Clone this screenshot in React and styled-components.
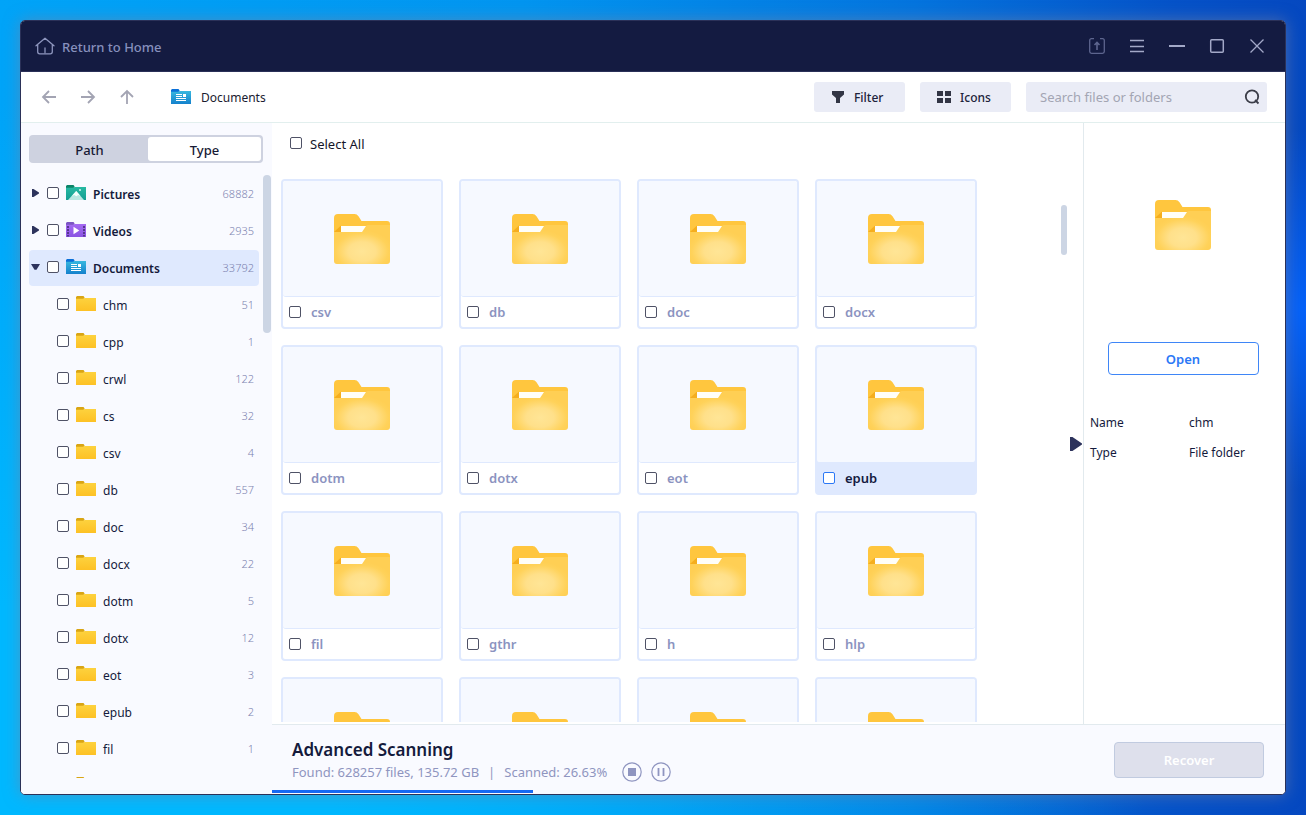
import React, { useState } from "react";
import styled, { createGlobalStyle, css } from "styled-components";

const GlobalStyle = createGlobalStyle`
  *, *::before, *::after { box-sizing: border-box; }
  body {
    margin: 0;
    font-family: "Noto Sans", "Open Sans", sans-serif;
    font-size: 12px;
    line-height: 16px;
    color: #141a3c;
  }
  button, input { font: inherit; color: inherit; }
`;

const Desktop = styled.div`
  height: 100vh;
  padding: 20px;
  background:
    radial-gradient(circle at 100% 38%, rgba(5, 100, 255, 0.9), transparent 180px),
    radial-gradient(ellipse at 0% 100%, rgba(0, 184, 255, 1) 18%, transparent 62%),
    linear-gradient(90deg, #00a4f8 0%, #0295f0 40%, #0474de 70%, #0552c8 90%, #0548c0 100%);
`;

const Window = styled.div`
  height: 100%;
  display: grid;
  grid-template-rows: 51px 51px minmax(0, 1fr);
  border: 1px solid #2b3158;
  border-radius: 5px;
  overflow: hidden;
  background: #fff;
  box-shadow: 0 0 16px rgba(120, 130, 160, 0.6);
`;

const TitleBar = styled.header`
  display: flex;
  align-items: center;
  justify-content: space-between;
  padding: 0 8px 0 14px;
  background: #141b41;
  border-bottom: 1px solid #2a3058;
`;

const HomeLink = styled.a`
  display: flex;
  align-items: center;
  gap: 7px;
  color: #8790bd;
  font-size: 13px;
  font-weight: 500;
  text-decoration: none;
`;

const Caption = styled.span`
  padding-top: 2px;
`;

const WindowControls = styled.div`
  display: flex;
`;

const WindowButton = styled.button`
  width: 40px;
  height: 40px;
  padding: 0;
  display: grid;
  place-items: center;
  border: 0;
  background: none;
  color: ${(p) => (p.$dim ? "#5d658e" : "#a3a9c8")};
`;

const Toolbar = styled.div`
  display: flex;
  align-items: center;
  padding: 0 18px 0 20px;
  border-bottom: 1px solid #e2efee;
`;

const NavGroup = styled.nav`
  display: flex;
  gap: 23px;
`;

const NavButton = styled.button`
  width: 16px;
  height: 16px;
  padding: 0;
  border: 0;
  background: none;
  color: #a3a4b3;
  svg { display: block; }
`;

const Location = styled.div`
  display: flex;
  align-items: center;
  gap: 10px;
  margin-left: 36px;
  color: #1a1b30;
`;

const Tools = styled.div`
  display: flex;
  gap: 15px;
  margin-left: auto;
`;

const ToolButton = styled.button`
  height: 30px;
  min-width: 91px;
  padding: 0 20px 0 16px;
  display: flex;
  align-items: center;
  gap: 8px;
  border: 0;
  border-radius: 3px;
  background: #eaecf6;
  color: #20233a;
  font-weight: 500;
`;

const SearchBox = styled.label`
  width: 241px;
  height: 30px;
  padding: 0 7px 0 14px;
  display: flex;
  align-items: center;
  border-radius: 3px;
  background: #eaecf6;
`;

const SearchInput = styled.input`
  flex: 1;
  min-width: 0;
  padding: 0;
  border: 0;
  outline: 0;
  background: none;
  font-size: 13px;
  &::placeholder { color: #a3a5b3; opacity: 1; }
`;

const Body = styled.div`
  display: grid;
  grid-template-columns: 251px minmax(0, 1fr);
  min-height: 0;
`;

const Sidebar = styled.aside`
  display: flex;
  flex-direction: column;
  min-height: 0;
  padding: 12px 1px 16px 8px;
  background: #f9faff;
`;

const Tabs = styled.div`
  display: grid;
  grid-template-columns: 117fr 113fr;
  height: 28px;
  margin-right: 8px;
  padding: 2px;
  border-radius: 4px;
  background: #ced2e0;
`;

const Tab = styled.button`
  padding: 2px 0 0;
  border: 0;
  border-radius: 3px;
  background: ${(p) => (p.$raised ? "#fff" : "transparent")};
  color: #171a35;
  font-size: 13px;
  font-weight: 500;
`;

const TreeArea = styled.div`
  flex: 1;
  min-height: 0;
  margin-top: 12px;
  display: flex;
  justify-content: space-between;
  overflow: hidden;
`;

const TreeList = styled.ul`
  flex: 1;
  margin: 0 4px 0 0;
  padding: 1px 0 0;
  list-style: none;
`;

const TreeRow = styled.li`
  height: 36px;
  margin-bottom: 1px;
  padding: 0 5px 2px ${(p) => (p.$child ? 28 : 2)}px;
  display: flex;
  align-items: center;
  border-radius: 4px;
  background: ${(p) => (p.$selected ? "#dfe9fe" : "transparent")};
  > svg { margin-right: 7px; }
`;

const Expander = styled.button`
  width: 9px;
  height: 16px;
  margin-right: 7px;
  padding: 0;
  display: grid;
  place-items: center;
  border: 0;
  background: none;
`;

const RowLabel = styled.label`
  flex: 1;
  padding-top: 3px;
  font-weight: ${(p) => (p.$strong ? 600 : 400)};
`;

const Count = styled.span`
  padding-top: 1px;
  font-size: 11px;
  font-weight: 300;
  color: #7c83b0;
`;

const CheckBox = styled.input.attrs({ type: "checkbox" })`
  appearance: none;
  flex: none;
  width: 12px;
  height: 12px;
  margin: 0;
  border: 1px solid ${(p) => (p.$active ? "#2b78f6" : "#4f5266")};
  border-radius: 2px;
  background: #fff;
  &:checked { background: #2b78f6; }
`;

const TreeCheck = styled(CheckBox)`
  margin-right: 7px;
`;

const ScrollThumb = styled.div`
  flex: none;
  width: ${(p) => p.$width}px;
  height: ${(p) => p.$height}px;
  border-radius: 4px;
  background: #ccd5e4;
`;

const Content = styled.div`
  display: grid;
  grid-template-rows: minmax(0, 1fr) 70px;
  min-height: 0;
`;

const Panes = styled.div`
  display: grid;
  grid-template-columns: minmax(0, 1fr) 202px;
  min-height: 0;
`;

const Browser = styled.main`
  display: flex;
  flex-direction: column;
  min-height: 0;
  padding: 12px 0 2px 9px;
`;

const SelectAll = styled.label`
  display: flex;
  align-items: center;
  gap: 8px;
  height: 16px;
  padding-left: 9px;
  font-size: 13px;
  color: #15162a;
`;

const BrowserArea = styled.div`
  flex: 1;
  min-height: 0;
  margin-top: 28px;
  display: flex;
  overflow: hidden;
`;

const CardGrid = styled.ul`
  flex: 1;
  display: grid;
  grid-template-columns: repeat(auto-fill, 162px);
  grid-auto-rows: 150px;
  align-content: start;
  gap: 16px;
  margin: 0;
  padding: 0;
  list-style: none;
`;

const Rail = styled.div`
  width: 22px;
  padding-top: 26px;
`;

const Card = styled.li`
  display: flex;
  flex-direction: column;
  border: 2px solid #dfe9fe;
  border-radius: 4px;
  background: #fff;
  color: #8b93c0;
  ${(p) => p.$active && css`
    background: #dfe9fe;
    color: #141b41;
  `}
`;

const Thumb = styled.div`
  flex: 1;
  display: grid;
  place-items: center;
  padding-top: 1px;
  border-bottom: 1px solid #dfe9fe;
  border-radius: 3px;
  background: #f6f9ff;
`;

const CardLabel = styled.label`
  height: 30px;
  padding-left: 6px;
  display: flex;
  align-items: center;
  gap: 10px;
  font-size: 13px;
  font-weight: 600;
`;

const Details = styled.aside`
  position: relative;
  display: flex;
  flex-direction: column;
  align-items: center;
  padding: 77px 9px 0 6px;
  border-left: 1px solid #e2eaee;
`;

const PanelHandle = styled.button`
  position: absolute;
  top: 313px;
  left: -14px;
  width: 12px;
  height: 16px;
  padding: 0;
  border: 0;
  background: none;
`;

const OpenButton = styled.button`
  width: 151px;
  height: 33px;
  margin-top: 92px;
  border: 1px solid #3f86f7;
  border-radius: 4px;
  background: #fff;
  color: #2b78f6;
  font-size: 13px;
  font-weight: 600;
`;

const Facts = styled.dl`
  align-self: stretch;
  display: grid;
  grid-template-columns: 99px 1fr;
  row-gap: 14px;
  margin: 40px 0 0;
  dt, dd { margin: 0; }
`;

const StatusBar = styled.footer`
  display: grid;
  grid-template-rows: 1fr 3px;
  padding-bottom: 1px;
  border-top: 1px solid #e2eaee;
  background: #f9faff;
`;

const StatusRow = styled.div`
  display: flex;
  align-items: center;
  justify-content: space-between;
  padding: 5px 21px 0 20px;
`;

const StatusTitle = styled.h1`
  margin: 0;
  font-size: 17px;
  line-height: 24px;
  font-weight: 600;
`;

const StatusLine = styled.div`
  display: flex;
  align-items: center;
  color: #8f95c0;
`;

const StatusText = styled.p`
  display: flex;
  gap: 9px;
  margin: 0 15px 0 0;
  font-size: 13px;
`;

const RoundButton = styled.button`
  width: 20px;
  height: 20px;
  margin-right: 9px;
  padding: 0;
  border: 0;
  background: none;
  svg { display: block; }
`;

const RecoverButton = styled.button`
  width: 150px;
  height: 36px;
  border: 1px solid #c1cbe0;
  border-radius: 4px;
  background: #dee0ec;
  color: #fff;
  font-size: 13px;
  font-weight: 600;
`;

const Progress = styled.div`
  background: transparent;
`;

const ProgressFill = styled.div`
  height: 100%;
  background: #1669f2;
`;

const Line = ({ size = 16, width = 1, children }) => (
  <svg width={size} height={size} viewBox={`0 0 ${size} ${size}`} fill="none" stroke="currentColor" strokeWidth={width} aria-hidden="true">
    {children}
  </svg>
);

const HomeIcon = () => (
  <svg width="20" height="18" viewBox="0 0 20 18" fill="none" stroke="#8d95bd" strokeWidth="1.3" strokeLinecap="round" strokeLinejoin="round" aria-hidden="true">
    <path d="M1 8.8 10 1.2l9 7.6M2.7 7.6v7.2c0 1.3.7 2 2 2h10.6c1.3 0 2-.7 2-2V7.6M10 11v4.6" />
  </svg>
);

const SmallFolder = ({ kind }) => {
  const palette = {
    pictures: ["#0b8468", "#27b9a2", "#149e93"],
    videos: ["#7b55c2", "#a56af2", "#8a54e2"],
    documents: ["#0a70d8", "#38b8df", "#1481cc"],
    folder: ["#d9a514", "#fdd23e", "#fdc125"],
  }[kind];
  const id = `small-${kind}`;
  return (
    <svg width="20" height="16" viewBox="0 0 20 16" aria-hidden="true">
      <defs>
        <linearGradient id={id} x1="0" y1="0" x2="0" y2="1">
          <stop offset="0" stopColor={palette[1]} />
          <stop offset="1" stopColor={palette[2]} />
        </linearGradient>
      </defs>
      <path d="M0 1 1 0h6.500L8.600 1.500 7.400 3.500H0z" fill={palette[0]} />
      <path d="M0 2.800h7.200L8.600 2H20V15H0z" fill={`url(#${id})`} />
      {kind === "pictures" && (
        <>
          <path d="M2 15 10.200 6l7.800 9z" fill="#b9e8e2" />
          <path d="M5.900 10.900 10.200 6l4.300 4.900-2.200-.9-2 1.300-2-1.300z" fill="#f3fffc" />
          <circle cx="14" cy="5" r="1" fill="#d8f6f1" />
        </>
      )}
      {kind === "videos" && (
        <>
          <path d="M1 4h2v2H1zM1 7h2v2H1zM1 10h2v2H1zM1 13h2v1.500H1zM17 4h2v2h-2zM17 7h2v2h-2zM17 10h2v2h-2zM17 13h2v1.500h-2z" fill="#56368f" />
          <path d="M7.500 4.700 13.300 8.500 7.500 12.300z" fill="#fff" />
        </>
      )}
      {kind === "documents" && (
        <path d="M5 5h6v1H5zM5 7h6v1H5zM12 5h3v3h-3zM5 9h10v1H5zM5 11h10v1H5z" fill="#fff" />
      )}
    </svg>
  );
};

const BigFolder = () => (
  <svg width="56" height="50" viewBox="0 0 56 50" aria-hidden="true">
    <defs>
      <radialGradient id="folder-glow" cx="0.5" cy="0.68" r="0.55">
        <stop offset="0" stopColor="#ffe596" />
        <stop offset="0.45" stopColor="#ffe08a" />
        <stop offset="0.85" stopColor="#ffd25a" />
        <stop offset="1" stopColor="#ffcf54" />
      </radialGradient>
    </defs>
    <path d="M0 4Q0 0 4 0H20.500Q23 0 24.500 2.200L27.500 7H53Q56 7 56 10V20H0z" fill="#ffc63e" />
    <path d="M0 18 7 11.500V18z" fill="#f5ae1e" />
    <path d="M7 12H34V18H7z" fill="#fffef8" />
    <path d="M0 18H28L32 12Q32.700 11 34 11H56V47Q56 50 53 50H3Q0 50 0 47z" fill="url(#folder-glow)" />
  </svg>
);

const ROOTS = [
  { id: "pictures", name: "Pictures", count: 68882 },
  { id: "videos", name: "Videos", count: 2935 },
  { id: "documents", name: "Documents", count: 33792, open: true },
];

const CHILDREN = [
  ["chm", 51], ["cpp", 1], ["crwl", 122], ["cs", 32], ["csv", 4], ["db", 557], ["doc", 34],
  ["docx", 22], ["dotm", 5], ["dotx", 12], ["eot", 3], ["epub", 2], ["fil", 1],
];

const CARDS = ["csv", "db", "doc", "docx", "dotm", "dotx", "eot", "epub", "fil", "gthr", "h", "hlp"];
const PARTIAL_CARDS = 4;

const Tree = () => (
  <TreeList>
    {ROOTS.map((r) => (
      <TreeRow key={r.id} $selected={r.open}>
        <Expander aria-label={`Toggle ${r.name}`} aria-expanded={!!r.open}>
          <svg width="9" height="8" viewBox="0 0 9 8" fill="#2d335c" aria-hidden="true">
            <path d={r.open ? "M0 1h9L5.500 6.700h-2z" : "M1 0h1.500L8 3.500v1L2.500 8H1z"} />
          </svg>
        </Expander>
        <TreeCheck id={`tree-${r.id}`} />
        <SmallFolder kind={r.id} />
        <RowLabel htmlFor={`tree-${r.id}`} $strong>{r.name}</RowLabel>
        <Count>{r.count}</Count>
      </TreeRow>
    ))}
    {CHILDREN.map(([name, count]) => (
      <TreeRow key={name} $child>
        <TreeCheck id={`tree-${name}`} />
        <SmallFolder kind="folder" />
        <RowLabel htmlFor={`tree-${name}`}>{name}</RowLabel>
        <Count>{count}</Count>
      </TreeRow>
    ))}
    <TreeRow $child aria-hidden="true">
      <TreeCheck tabIndex={-1} />
      <SmallFolder kind="folder" />
    </TreeRow>
  </TreeList>
);

export default function App() {
  const [query, setQuery] = useState("");
  const progress = 25.8;

  return (
    <>
      <GlobalStyle />
      <Desktop>
        <Window>
          <TitleBar>
            <HomeLink href="#home"><HomeIcon /><Caption>Return to Home</Caption></HomeLink>
            <WindowControls>
              <WindowButton $dim aria-label="Export">
                <Line width={1.3}><path d="M5 .7H2.500Q.7.700.7 2.500v11Q.7 15.300 2.500 15.300h11q1.800 0 1.800-1.800v-11Q15.300.7 13.500.7H11" /><path d="M8 12V5M5.500 7 8 4.500 10.500 7" strokeWidth="1.600" /></Line>
              </WindowButton>
              <WindowButton aria-label="Menu"><Line width={1.3}><path d="M1 2.500h14M1 8.500h14M1 13.500h14" /></Line></WindowButton>
              <WindowButton aria-label="Minimize"><Line width={2}><path d="M0 8h16" /></Line></WindowButton>
              <WindowButton aria-label="Maximize"><Line width={1.5}><rect x="1.700" y="1.700" width="12.600" height="12.600" rx="1" /></Line></WindowButton>
              <WindowButton aria-label="Close"><Line width={1.3}><path d="m1.500 1.500 13 13m0-13-13 13" /></Line></WindowButton>
            </WindowControls>
          </TitleBar>

          <Toolbar>
            <NavGroup aria-label="Folder navigation">
              <NavButton aria-label="Back"><Line width={1.8}><path d="M15 8H2M8 2 2 8l6 6" /></Line></NavButton>
              <NavButton aria-label="Forward"><Line width={1.8}><path d="M1 8h13M8 2l6 6-6 6" /></Line></NavButton>
              <NavButton aria-label="Up"><Line width={1.8}><path d="M8 15V2M2 8l6-6 6 6" /></Line></NavButton>
            </NavGroup>
            <Location><SmallFolder kind="documents" /><Caption>Documents</Caption></Location>
            <Tools>
              <ToolButton>
                <svg width="16" height="14" viewBox="0 0 16 14" fill="#323544" aria-hidden="true"><path d="M2 1h12v3.500L10 8v5H6V8L2 4.500z" /></svg>
                <Caption>Filter</Caption>
              </ToolButton>
              <ToolButton>
                <svg width="16" height="14" viewBox="0 0 16 14" fill="#323544" aria-hidden="true"><path d="M1 1h6v5H1zM9 1h6v5H9zM1 8h6v5H1zM9 8h6v5H9z" /></svg>
                <Caption>Icons</Caption>
              </ToolButton>
              <SearchBox>
                <SearchInput
                  aria-label="Search files or folders"
                  placeholder="Search files or folders"
                  value={query}
                  onChange={(e) => setQuery(e.target.value)}
                />
                <svg width="16" height="16" viewBox="0 0 16 16" fill="none" stroke="#3b3d48" strokeWidth="1.800" aria-hidden="true">
                  <circle cx="8" cy="7.500" r="6.200" /><path d="m11 11 3.500 3.500" />
                </svg>
              </SearchBox>
            </Tools>
          </Toolbar>

          <Body>
            <Sidebar>
              <Tabs role="tablist">
                <Tab role="tab" aria-selected="false">Path</Tab>
                <Tab role="tab" aria-selected="true" $raised>Type</Tab>
              </Tabs>
              <TreeArea>
                <Tree />
                <ScrollThumb $width={8} $height={158} />
              </TreeArea>
            </Sidebar>

            <Content>
              <Panes>
                <Browser>
                  <SelectAll><CheckBox /><Caption>Select All</Caption></SelectAll>
                  <BrowserArea>
                    <CardGrid>
                      {CARDS.map((name) => (
                        <Card key={name} $active={name === "epub"}>
                          <Thumb><BigFolder /></Thumb>
                          <CardLabel><CheckBox $active={name === "epub"} />{name}</CardLabel>
                        </Card>
                      ))}
                      {Array.from({ length: PARTIAL_CARDS }, (_, i) => (
                        <Card key={i} aria-hidden="true"><Thumb><BigFolder /></Thumb><CardLabel as="div" /></Card>
                      ))}
                    </CardGrid>
                    <Rail><ScrollThumb $width={6} $height={50} /></Rail>
                  </BrowserArea>
                </Browser>
                <Details>
                  <PanelHandle aria-label="Hide details">
                    <svg width="12" height="16" viewBox="0 0 12 16" fill="#2d335c" aria-hidden="true"><path d="M0 1h2.500L12 7.500v1L2.500 15H0z" /></svg>
                  </PanelHandle>
                  <BigFolder />
                  <OpenButton>Open</OpenButton>
                  <Facts>
                    <dt>Name</dt><dd>chm</dd>
                    <dt>Type</dt><dd>File folder</dd>
                  </Facts>
                </Details>
              </Panes>
              <StatusBar>
                <StatusRow>
                  <div>
                    <StatusTitle>Advanced Scanning</StatusTitle>
                    <StatusLine>
                      <StatusText>
                        <span>Found: 628257 files, 135.72 GB</span>
                        <span>|</span>
                        <span>Scanned: 26.63%</span>
                      </StatusText>
                      <RoundButton aria-label="Stop">
                        <Line size={20} width={1.2}><circle cx="10" cy="10" r="9.200" /><path d="M6 6h8v8H6z" fill="currentColor" stroke="none" /></Line>
                      </RoundButton>
                      <RoundButton aria-label="Pause">
                        <Line size={20} width={1.2}><circle cx="10" cy="10" r="9.200" /><path d="M7.500 6v8M12.500 6v8" strokeWidth="1.800" /></Line>
                      </RoundButton>
                    </StatusLine>
                  </div>
                  <RecoverButton disabled>Recover</RecoverButton>
                </StatusRow>
                <Progress role="progressbar" aria-label="Scan progress" aria-valuenow={progress}>
                  <ProgressFill style={{ width: `${progress}%` }} />
                </Progress>
              </StatusBar>
            </Content>
          </Body>
        </Window>
      </Desktop>
    </>
  );
}
